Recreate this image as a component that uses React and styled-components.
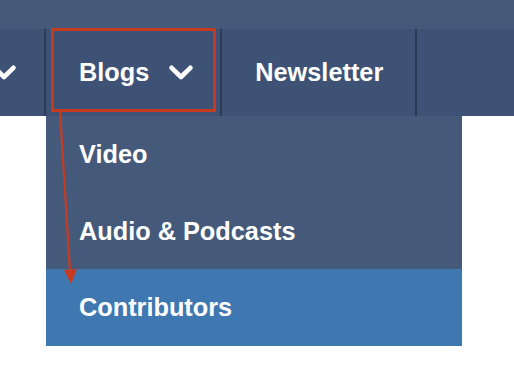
import styled, { createGlobalStyle } from "styled-components";

const GlobalStyle = createGlobalStyle`
  body {
    margin: 0;
    background: #ffffff;
    font-family: "Liberation Sans", Arial, sans-serif;
  }
`;

const Page = styled.div`
  position: relative;
  width: 514px;
  height: 382px;
  overflow: hidden;
`;

const TopBand = styled.div`
  height: 29px;
  background: #455a7b;
`;

const NavBar = styled.nav`
  display: flex;
  height: 87px;
  background: #3d5275;
`;

const NavItem = styled.div`
  display: flex;
  align-items: center;
  flex-shrink: 0;
  box-sizing: border-box;
  height: 100%;
  padding: 0 ${(p) => p.$padRight || 32}px 0 33px;
  border-right: 2px solid #2b3b55;
  color: #ffffff;
  font-size: 25.3px;
  font-weight: 700;
  overflow: hidden;
`;

const CutItem = styled(NavItem)`
  width: 46px;
  padding: 0 28px 0 0;
  justify-content: flex-end;
`;

const Chevron = styled.svg`
  flex-shrink: 0;
  width: 24px;
  height: 15px;
  margin-left: ${(p) => p.$gap || 0}px;
`;

const Dropdown = styled.ul`
  position: absolute;
  left: 46px;
  top: 116px;
  width: 416px;
  height: 230px;
  margin: 0;
  padding: 0;
  list-style: none;
  display: flex;
  flex-direction: column;
  background: #455a7b;
`;

const DropItem = styled.li`
  flex: 1;
  display: flex;
  align-items: center;
  padding: 0 33px;
  color: #ffffff;
  font-size: 25.3px;
  font-weight: 700;
  background: ${(p) => (p.$active ? "#3f78b0" : "transparent")};
`;

const Highlight = styled.div`
  position: absolute;
  left: 51px;
  top: 28px;
  width: 165px;
  height: 84px;
  box-sizing: border-box;
  border: 3px solid #c63a20;
`;

const Arrow = styled.svg`
  position: absolute;
  left: 0;
  top: 0;
  width: 514px;
  height: 382px;
  pointer-events: none;
`;

const ChevronIcon = ({ gap }) => (
  <Chevron viewBox="0 0 24 15" $gap={gap}>
    <path
      d="M2.6 2.8 L12 12 L21.4 2.8"
      fill="none"
      stroke="#ffffff"
      strokeWidth="4.6"
      strokeLinecap="round"
      strokeLinejoin="round"
    />
  </Chevron>
);

export default function App() {
  return (
    <Page>
      <GlobalStyle />
      <TopBand />
      <NavBar>
        <CutItem>
          <ChevronIcon />
        </CutItem>
        <NavItem $padRight={27}>
          Blogs
          <ChevronIcon gap={20} />
        </NavItem>
        <NavItem>Newsletter</NavItem>
      </NavBar>
      <Dropdown>
        <DropItem>Video</DropItem>
        <DropItem>Audio &amp; Podcasts</DropItem>
        <DropItem $active>Contributors</DropItem>
      </Dropdown>
      <Highlight />
      <Arrow viewBox="0 0 514 382">
        <line x1="60" y1="111" x2="70" y2="272" stroke="#c63a20" strokeWidth="2.2" />
        <polygon points="64,270 77,269 71,284" fill="#c63a20" />
      </Arrow>
    </Page>
  );
}
